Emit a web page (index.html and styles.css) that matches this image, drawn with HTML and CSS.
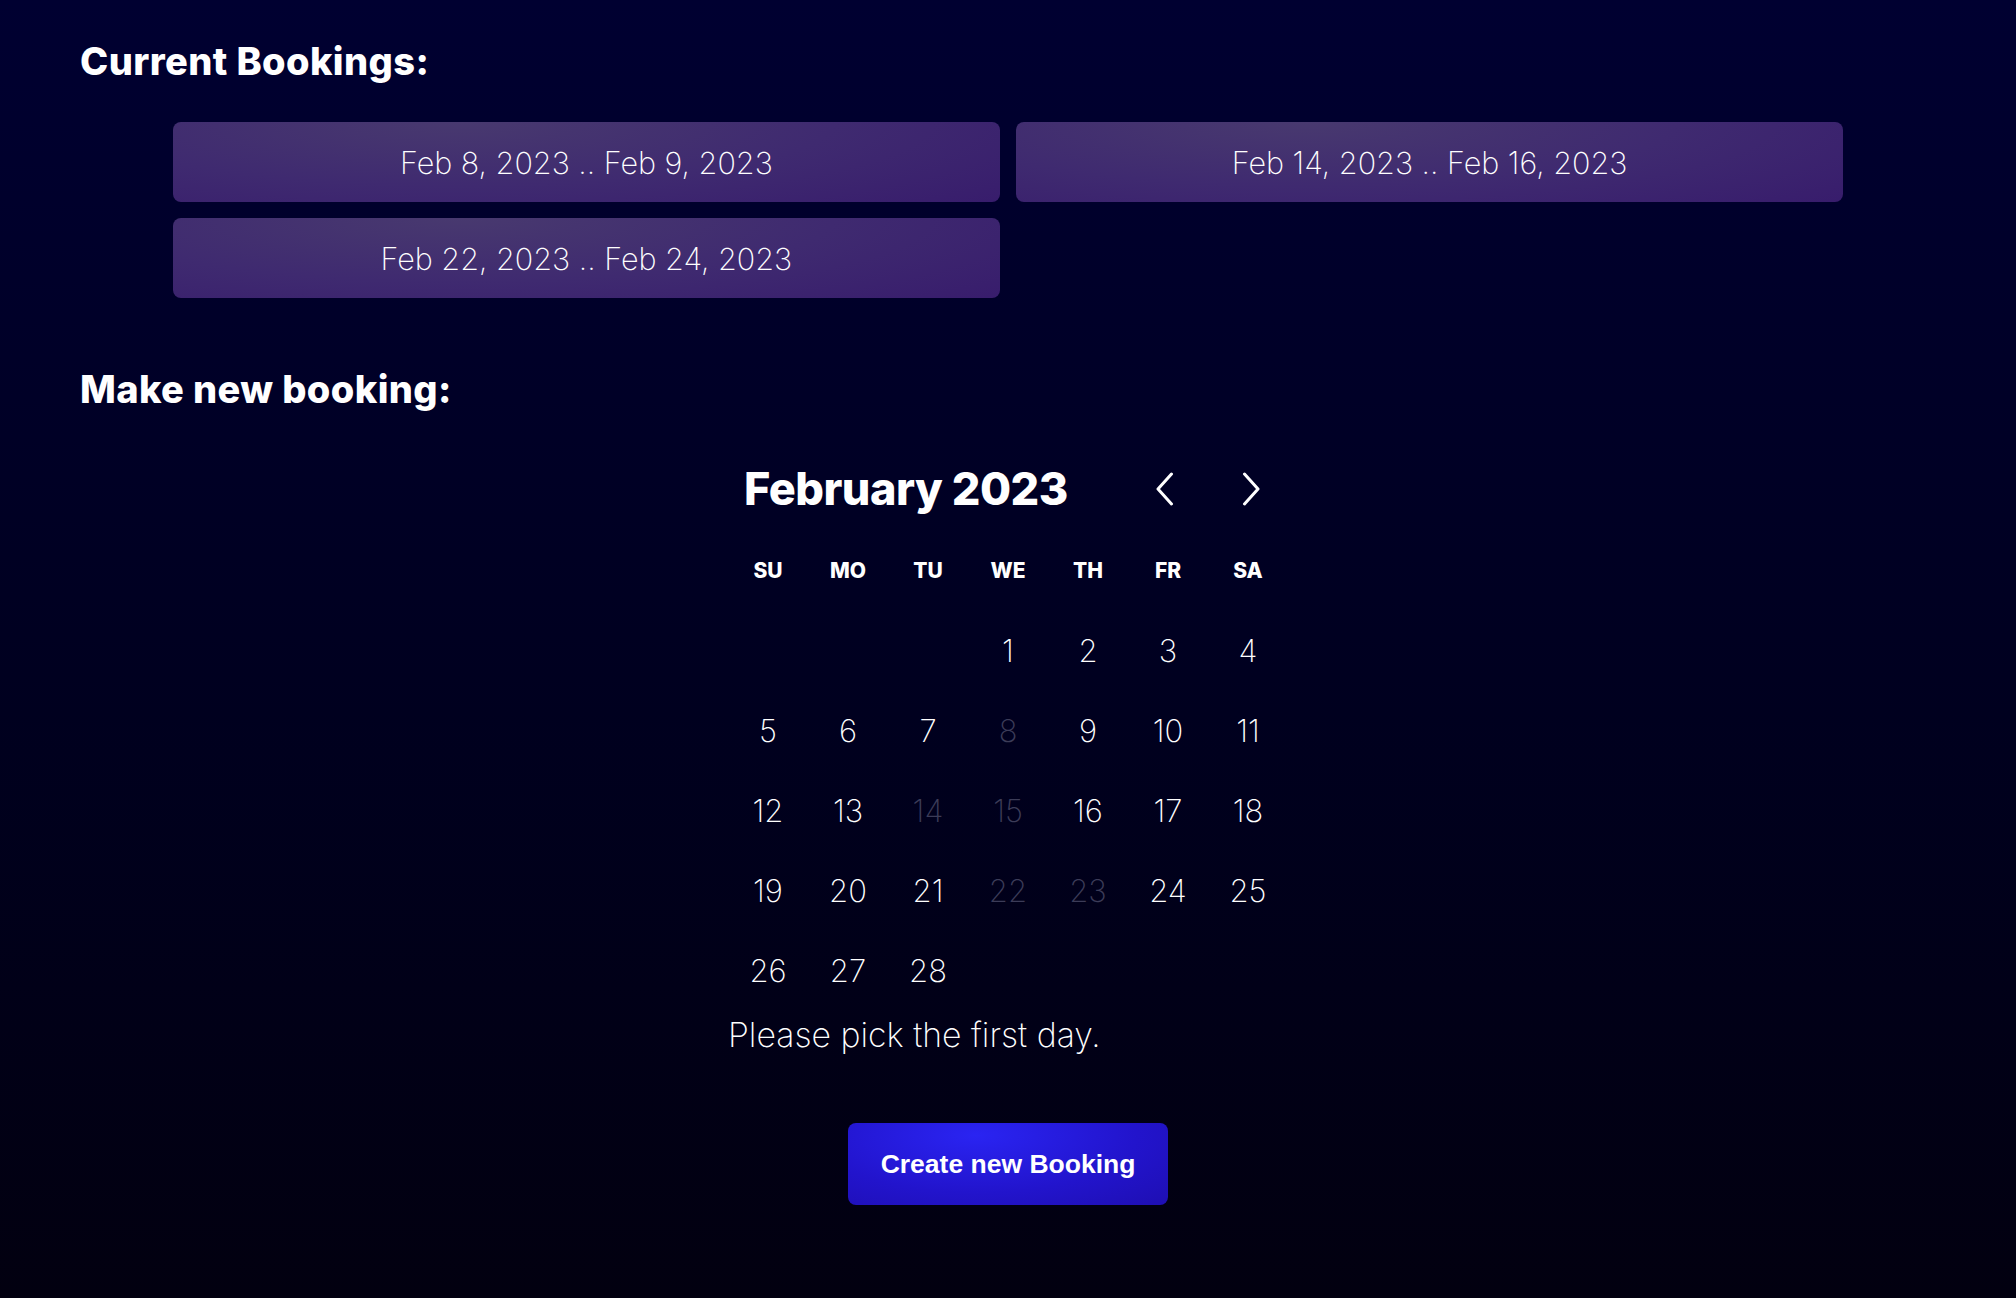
FILE: index.html
```html
<!DOCTYPE html>
<html lang="en">
<head>
<meta charset="utf-8">
<title>Bookings</title>
<link rel="stylesheet" href="styles.css">
</head>
<body>
<main class="page">
  <h2 class="section-title">Current Bookings:</h2>
  <div class="bookings">
    <div class="booking">Feb 8, 2023 .. Feb 9, 2023</div>
    <div class="booking">Feb 14, 2023 .. Feb 16, 2023</div>
    <div class="booking">Feb 22, 2023 .. Feb 24, 2023</div>
  </div>

  <h2 class="section-title section-title--new">Make new booking:</h2>

  <div class="calendar">
    <div class="cal-head">
      <div class="cal-title">February 2023</div>
      <button class="cal-nav" aria-label="Previous month">
        <svg width="20" height="34" viewBox="0 0 20 34"><polyline points="16.5,2 3,17 16.5,32" fill="none" stroke="#fff" stroke-width="3" stroke-linecap="round" stroke-linejoin="round"/></svg>
      </button>
      <button class="cal-nav" aria-label="Next month">
        <svg width="20" height="34" viewBox="0 0 20 34"><polyline points="3.5,2 17,17 3.5,32" fill="none" stroke="#fff" stroke-width="3" stroke-linecap="round" stroke-linejoin="round"/></svg>
      </button>
    </div>
    <div class="cal-grid">
      <div class="wd">SU</div><div class="wd">MO</div><div class="wd">TU</div><div class="wd">WE</div><div class="wd">TH</div><div class="wd">FR</div><div class="wd">SA</div>
      <div class="day empty"></div><div class="day empty"></div><div class="day empty"></div>
      <div class="day">1</div><div class="day">2</div><div class="day">3</div><div class="day">4</div>
      <div class="day">5</div><div class="day">6</div><div class="day">7</div><div class="day off">8</div><div class="day">9</div><div class="day">10</div><div class="day">11</div>
      <div class="day">12</div><div class="day">13</div><div class="day off">14</div><div class="day off">15</div><div class="day">16</div><div class="day">17</div><div class="day">18</div>
      <div class="day">19</div><div class="day">20</div><div class="day">21</div><div class="day off">22</div><div class="day off">23</div><div class="day">24</div><div class="day">25</div>
      <div class="day">26</div><div class="day">27</div><div class="day">28</div>
    </div>
    <p class="hint">Please pick the first day.</p>
  </div>

  <div class="actions">
    <button class="create">Create new Booking</button>
  </div>
</main>
</body>
</html>
```

FILE: styles.css
```css
* { box-sizing: border-box; }

html, body {
  margin: 0;
  min-height: 100%;
}

body {
  min-height: 100vh;
  background: linear-gradient(180deg, #000031 0%, #00001f 55%, #020010 100%);
  color: #fff;
  font-family: "Inter", "Noto Sans", sans-serif;
}

.page {
  padding: 41px 80px 60px;
}

.section-title {
  margin: 0;
  font-size: 38px;
  line-height: 40px;
  font-weight: 800;
  letter-spacing: 0.4px;
}

.bookings {
  width: 90%;
  margin: 41px auto 0;
  display: grid;
  grid-template-columns: 1fr 1fr;
  gap: 16px;
}

.booking {
  height: 80px;
  border-radius: 8px;
  display: flex;
  align-items: center;
  justify-content: center;
  font-size: 30.5px;
  font-weight: 250;
  background: radial-gradient(ellipse 90% 160% at 35% 0%, #48396f 0%, #3f2a70 50%, #371b6c 100%);
}

.section-title--new {
  margin-top: 71px;
}

.calendar {
  width: 560px;
  margin: 52px auto 0;
}

.cal-head {
  display: flex;
  align-items: center;
  height: 56px;
  padding: 0 15px 0 16px;
}

.cal-title {
  flex: 1;
  font-size: 45px;
  line-height: 56px;
  font-weight: 800;
  letter-spacing: -0.5px;
}

.cal-nav {
  width: 44px;
  height: 44px;
  padding: 0;
  border: 0;
  background: none;
  display: flex;
  align-items: center;
  justify-content: center;
  cursor: pointer;
}

.cal-nav + .cal-nav {
  margin-left: 42px;
}

.cal-grid {
  margin-top: 13px;
  display: grid;
  grid-template-columns: repeat(7, 80px);
  grid-auto-rows: 80px;
}

.wd, .day {
  display: flex;
  align-items: center;
  justify-content: center;
}

.wd {
  font-size: 21px;
  font-weight: 800;
}

.day {
  font-size: 31px;
  font-weight: 250;
}

.day.off {
  color: #3c3c58;
}

.hint {
  margin: 5px 0 0;
  font-size: 33.8px;
  line-height: 40px;
  font-weight: 250;
}

.actions {
  display: flex;
  justify-content: center;
  margin-top: 68px;
}

.create {
  width: 320px;
  height: 82px;
  border: 0;
  border-radius: 8px;
  color: #fff;
  font-family: "Liberation Sans", Arial, sans-serif;
  font-weight: 700;
  font-size: 26.5px;
  background: radial-gradient(ellipse 100% 140% at 40% 15%, #2a24f2 0%, #2214cc 50%, #1d0ca8 100%);
  cursor: pointer;
}
```
